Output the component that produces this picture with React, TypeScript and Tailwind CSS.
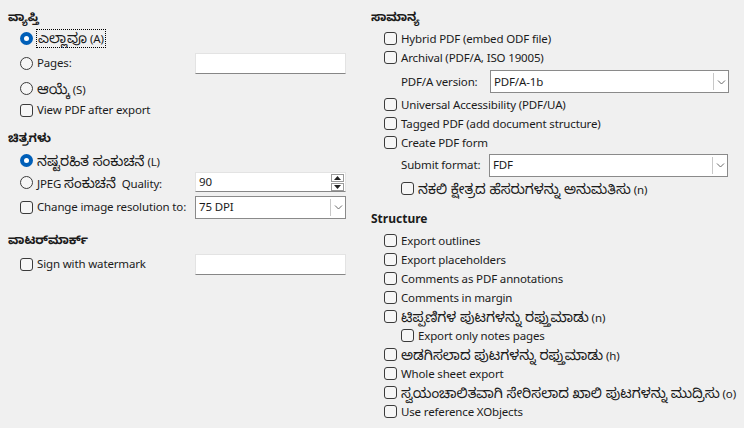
import React from 'react'

const font = { fontFamily: '"Noto Sans", "Noto Sans Kannada", "Open Sans", sans-serif' }

// kannada runs are set a bit larger, like the Nirmala UI fallback in the shot
function K({ children }: { children: React.ReactNode }) {
  return <span className="text-[14px] tracking-normal">{children}</span>
}

function Box() {
  return <span className="shrink-0 w-[13px] h-[13px] rounded-[3px] border border-[#3b3b3b] bg-[#f6f6f6]" />
}

function Check({ label, h = 'h-[19px]', indent = false }: { label: React.ReactNode; h?: string; indent?: boolean }) {
  return (
    <div className={`flex items-center ${h} ${indent ? 'pl-[17px]' : ''}`}>
      <Box />
      <span className="ml-[4px] whitespace-nowrap">{label}</span>
    </div>
  )
}

function Radio({ on = false }: { on?: boolean }) {
  if (on) {
    return (
      <span className="shrink-0 w-[13px] h-[13px] rounded-full bg-[#005fb8] flex items-center justify-center">
        <span className="w-[5px] h-[5px] rounded-full bg-white" />
      </span>
    )
  }
  return <span className="shrink-0 w-[13px] h-[13px] rounded-full border border-[#3b3b3b] bg-[#f6f6f6]" />
}

function TextBox({ value = '' }: { value?: string }) {
  return (
    <div className="w-[151px] h-[21px] bg-white border border-[#e3e3e3] border-b-[#868686] flex items-center px-[3px]">
      {value}
    </div>
  )
}

function Chevron() {
  return (
    <svg width="9" height="6" viewBox="0 0 9 6">
      <path d="M1 1.5 L4.5 5 L8 1.5" fill="none" stroke="#6a6a6a" strokeWidth="1" />
    </svg>
  )
}

function Combo({ value, w }: { value: string; w: string }) {
  return (
    <div className={`${w} h-[23px] bg-white border border-[#8a8a8a] flex items-stretch`}>
      <div className="flex-1 flex items-center pl-[3px]">{value}</div>
      <div className="w-[15px] border-l border-[#c8c8c8] my-[2px] flex items-center justify-center">
        <Chevron />
      </div>
    </div>
  )
}

function Spin({ value }: { value: string }) {
  return (
    <div className="w-[151px] h-[20px] bg-white border border-[#e3e3e3] border-b-[#868686] flex items-stretch">
      <div className="flex-1 flex items-center pl-[3px]">{value}</div>
      <div className="w-[14px] flex flex-col justify-center gap-[1px] pr-[1px]">
        <div className="h-[8px] border border-[#9a9a9a] flex items-center justify-center">
          <svg width="7" height="4" viewBox="0 0 7 4"><path d="M0 4 L3.5 0 L7 4 Z" fill="#222" /></svg>
        </div>
        <div className="h-[8px] border border-[#9a9a9a] flex items-center justify-center">
          <svg width="7" height="4" viewBox="0 0 7 4"><path d="M0 0 L3.5 4 L7 0 Z" fill="#222" /></svg>
        </div>
      </div>
    </div>
  )
}

function Heading({ children, className = '' }: { children: React.ReactNode; className?: string }) {
  return <div className={`h-[18px] flex items-center font-bold text-[12px] tracking-normal ${className}`}>{children}</div>
}

export default function App() {
  return (
    <div
      className="w-[744px] h-[428px] bg-[#f0f0f0] text-[11.5px] tracking-[-0.15px] text-[#1b1b1b] flex overflow-hidden"
      style={font}
    >
      {/* left column */}
      <div className="w-[363px] pl-[8px] pt-[8px] flex flex-col">
        <Heading>ವ್ಯಾಪ್ತಿ</Heading>
        <div className="h-[24px] flex items-center pl-[12px]">
          <Radio on />
          <span className="ml-[3px] px-[1px] border border-dotted border-black leading-[16px]">
            <K>ಎಲ್ಲಾವೂ</K> (A)
          </span>
        </div>
        <div className="h-[26px] flex items-center pl-[12px]">
          <Radio />
          <span className="ml-[4px] w-[158px]">Pages:</span>
          <TextBox />
        </div>
        <div className="h-[24px] flex items-center pl-[12px]">
          <Radio />
          <span className="ml-[4px]"><K>ಆಯ್ಕೆ</K> (S)</span>
        </div>
        <div className="pl-[12px]">
          <Check label="View PDF after export" h="h-[20px]" />
        </div>

        <Heading className="mt-[9px]">ಚಿತ್ರಗಳು</Heading>
        <div className="mt-[2px] h-[22px] flex items-center pl-[12px]">
          <Radio on />
          <span className="ml-[4px]"><K>ನಷ್ಟರಹಿತ ಸಂಕುಚನೆ</K> (L)</span>
        </div>
        <div className="h-[22px] flex items-center pl-[12px]">
          <Radio />
          <span className="ml-[4px] w-[158px] whitespace-nowrap">JPEG <K>ಸಂಕುಚನೆ</K>&nbsp; Quality:</span>
          <Spin value="90" />
        </div>
        <div className="mt-[3px] h-[22px] flex items-center pl-[12px]">
          <Box />
          <span className="ml-[4px] w-[158px] whitespace-nowrap">Change image resolution to:</span>
          <Combo value="75 DPI" w="w-[151px]" />
        </div>

        <Heading className="mt-[13px]">ವಾಟರ್‌ಮಾರ್ಕ್</Heading>
        <div className="mt-[4px] h-[22px] flex items-center pl-[12px]">
          <Box />
          <span className="ml-[4px] w-[158px]">Sign with watermark</span>
          <TextBox />
        </div>
      </div>

      {/* right column */}
      <div className="flex-1 pl-[8px] pt-[8px] flex flex-col">
        <Heading>ಸಾಮಾನ್ಯ</Heading>
        <div className="mt-[3px] pl-[13px] flex flex-col">
          <Check label="Hybrid PDF (embed ODF file)" />
          <Check label="Archival (PDF/A, ISO 19005)" />
        </div>
        <div className="mt-[3px] h-[23px] flex items-center pl-[30px]">
          <span className="w-[89px]">PDF/A version:</span>
          <Combo value="PDF/A-1b" w="w-[239px]" />
        </div>
        <div className="mt-[2px] pl-[13px] flex flex-col">
          <Check label="Universal Accessibility (PDF/UA)" />
          <Check label="Tagged PDF (add document structure)" />
          <Check label="Create PDF form" />
        </div>
        <div className="mt-[2px] h-[22px] flex items-center pl-[30px]">
          <span className="w-[88px]">Submit format:</span>
          <Combo value="FDF" w="w-[239px]" />
        </div>
        <div className="mt-[2px] pl-[13px]">
          <Check label={<><K>ನಕಲಿ ಕ್ಷೇತ್ರದ ಹೆಸರುಗಳನ್ನು ಅನುಮತಿಸು</K> (n)</>} h="h-[20px]" indent />
        </div>

        <Heading className="mt-[12px]">Structure</Heading>
        <div className="mt-[3px] pl-[13px] flex flex-col">
          <Check label="Export outlines" />
          <Check label="Export placeholders" />
          <Check label="Comments as PDF annotations" />
          <Check label="Comments in margin" />
          <Check label={<><K>ಟಿಪ್ಪಣಿಗಳ ಪುಟಗಳನ್ನು ರಫ್ತುಮಾಡು</K> (n)</>} />
          <Check label="Export only notes pages" indent />
          <Check label={<><K>ಅಡಗಿಸಲಾದ ಪುಟಗಳನ್ನು ರಫ್ತುಮಾಡು</K> (h)</>} />
          <Check label="Whole sheet export" />
          <Check label={<><K>ಸ್ವಯಂಚಾಲಿತವಾಗಿ ಸೇರಿಸಲಾದ ಖಾಲಿ ಪುಟಗಳನ್ನು ಮುದ್ರಿಸು</K> (o)</>} />
          <Check label="Use reference XObjects" />
        </div>
      </div>
    </div>
  )
}
